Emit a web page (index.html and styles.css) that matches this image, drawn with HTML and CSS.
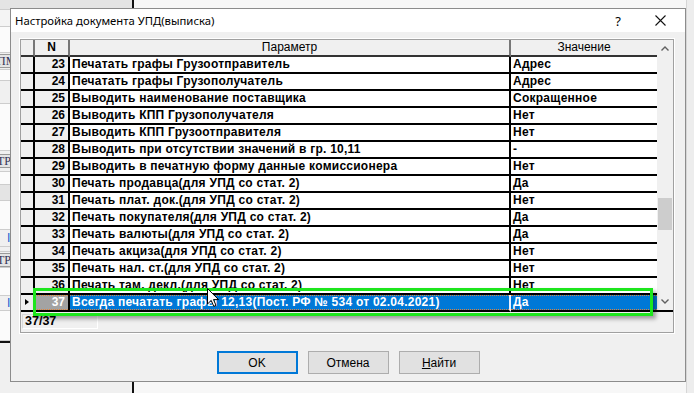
FILE: index.html
```html
<!DOCTYPE html>
<html lang="ru">
<head>
  <meta charset="UTF-8">
  <title>Настройка документа УПД(выписка)</title>
  <link rel="stylesheet" href="styles.css">
</head>
<body>
  <!-- window behind the dialog -->
  <div class="backwin">
    <div class="strip h9 grey"></div>
    <div class="strip h16 soft"></div>
    <div class="strip h25 white"></div>
    <div class="strip h16"><span class="tbtn">ПМ</span></div>
    <div class="strip h10 white"></div>
    <div class="strip h22"></div>
    <div class="strip h46 white"></div>
    <div class="strip h20"><span class="tbtn">ТР</span></div>
    <div class="strip h12 white"></div>
    <div class="strip h15 grey"></div>
    <div class="strip h28 white"></div>
    <div class="strip h16"><span class="blue">I</span></div>
    <div class="strip h4"></div>
    <div class="strip h15"><span class="tbtn">ТР</span></div>
    <div class="strip h27 white"></div>
    <div class="strip h14"><span class="blue">I</span></div>
    <div class="strip h29 white"></div>
    <div class="strip rest"></div>
  </div>
  <div class="backright"></div>

  <div class="dialog">
    <div class="titlebar">
      <span class="title">Настройка документа УПД(выписка)</span>
      <span class="tb-help">?</span>
      <span class="tb-close">
        <svg width="11" height="11" viewBox="0 0 11 11"><path d="M0.5 0.5L10.5 10.5M10.5 0.5L0.5 10.5" stroke="#111" stroke-width="1.1" fill="none"/></svg>
      </span>
    </div>

    <div class="body">
      <div class="gridframe">
        <div class="gridtop">
          <div class="table" id="table">
            <div class="hc ind"></div>
            <div class="hc num">N</div>
            <div class="hc">Параметр</div>
            <div class="hc">Значение</div>
          </div>
          <div class="vscroll">
            <span class="arr up">
              <svg width="8" height="5" viewBox="0 0 8 5"><path d="M0.5 4.5L4 1L7.5 4.5" stroke="#606060" stroke-width="1.4" fill="none"/></svg>
            </span>
            <div class="track"><div class="thumb"></div></div>
            <span class="arr down">
              <svg width="8" height="5" viewBox="0 0 8 5"><path d="M0.5 0.5L4 4L7.5 0.5" stroke="#606060" stroke-width="1.4" fill="none"/></svg>
            </span>
          </div>
        </div>
        <div class="status"><span class="counter">37/37</span></div>
      </div>

      <div class="buttons">
        <button class="btn default">OK</button>
        <button class="btn">Отмена</button>
        <button class="btn"><u>Н</u>айти</button>
      </div>
    </div>
  </div>

  <div class="marker"></div>
  <svg class="cursor" width="13" height="20" viewBox="0 0 13 20">
    <path d="M0.5 0.5L0.5 16L4.2 12.4L6.8 18.4L9 17.4L6.5 11.6L11.5 11.6Z" fill="#fff" stroke="#000" stroke-width="1"/>
  </svg>

<script>
const rows = [
  [23, 'Печатать графы Грузоотправитель', 'Адрес'],
  [24, 'Печатать графы Грузополучатель', 'Адрес'],
  [25, 'Выводить наименование поставщика', 'Сокращенное'],
  [26, 'Выводить КПП Грузополучателя', 'Нет'],
  [27, 'Выводить КПП Грузоотправителя', 'Нет'],
  [28, 'Выводить при отсутствии значений в гр. 10,11', '-'],
  [29, 'Выводить в печатную форму данные комиссионера', 'Нет'],
  [30, 'Печать продавца(для УПД со стат. 2)', 'Да'],
  [31, 'Печать плат. док.(для УПД со стат. 2)', 'Нет'],
  [32, 'Печать покупателя(для УПД со стат. 2)', 'Да'],
  [33, 'Печать валюты(для УПД со стат. 2)', 'Да'],
  [34, 'Печать акциза(для УПД со стат. 2)', 'Нет'],
  [35, 'Печать нал. ст.(для УПД со стат. 2)', 'Нет'],
  [36, 'Печать там. декл.(для УПД со стат. 2)', 'Нет'],
  [37, 'Всегда печатать графы 12,13(Пост. РФ № 534 от 02.04.2021)', 'Да']
];
const table = document.getElementById('table');
rows.forEach(([n, name, val], i) => {
  const sel = i === rows.length - 1 ? ' sel' : '';
  table.insertAdjacentHTML('beforeend',
    `<div class="c ind${sel}">${sel ? '<span class="tri"></span>' : ''}</div>` +
    `<div class="c num${sel}">${n}</div>` +
    `<div class="c txt${sel}">${name}</div>` +
    `<div class="c val${sel}">${val}</div>`);
});
</script>
</body>
</html>
```

FILE: styles.css
```css
*{box-sizing:border-box;}
body{margin:0;width:694px;height:393px;overflow:hidden;position:relative;background:#f7f7f7;font-family:"Liberation Sans",Arial,sans-serif;}

/* background windows */
.backwin{position:absolute;left:0;top:0;width:134px;height:393px;background:#f0f0f0;border-right:2px solid #111;display:flex;flex-direction:column;}
.backright{position:absolute;left:686px;top:0;right:0;height:393px;background:#ededed;border-left:1px solid #d6d6d6;}
.strip{flex:none;border-bottom:1px solid #cdcdcd;display:flex;align-items:center;}
.h4{height:5px;}.h9{height:10px;}.h10{height:11px;}.h12{height:13px;}.h14{height:15px;}
.h15{height:16px;}.h16{height:17px;}.h20{height:21px;}.h22{height:23px;}.h25{height:26px;}
.h27{height:28px;}.h28{height:29px;}.h29{height:30px;}.h46{height:47px;}
.grey{background:#e4e4e4;}
.soft{background:#f4f4f4;}
.white{background:#fbfbfb;}
.rest{flex:1;border-top:2px solid #111;border-bottom:none;}
.tbtn{font-family:"Liberation Serif",serif;font-size:12px;line-height:12px;color:#335;background:#e4e4e4;border:1px solid #9a9a9a;padding:0 1px;margin-left:-5px;}
.blue{color:#1f5fd0;font-size:12px;line-height:12px;margin-left:7px;}

/* dialog */
.dialog{position:absolute;left:10px;top:8px;width:676px;height:374px;border:1px solid #8c8c8c;background:#f0f0f0;display:flex;flex-direction:column;}
.titlebar{height:23px;background:#fff;display:flex;align-items:center;padding-left:4px;font-family:"Noto Sans","Open Sans",sans-serif;font-size:11.3px;color:#000;}
.title{flex:1;}
.tb-help{width:14px;text-align:center;margin-right:30px;font-size:13px;}
.tb-close{width:12px;margin-right:18px;display:flex;}

.body{flex:1;padding:7px 11px 0 9px;display:flex;flex-direction:column;}
.gridframe{height:294px;border:1px solid #a0a0a0;box-shadow:0 0 0 1px #fff;background:#f0f0f0;display:flex;flex-direction:column;}
.gridtop{display:flex;height:272px;}

.table{display:grid;grid-template-columns:14px 35px 441px 146px;grid-auto-rows:17px;width:636px;font-size:12px;}
.hc{background:#f0f0f0;border-right:2px solid #777;border-bottom:2px solid #333;text-align:center;line-height:15px;color:#000;}
.hc.num{font-weight:bold;}
.hc:nth-child(4){border-right:none;}
.c{border-right:2px solid #000;border-bottom:2px solid #000;background:#fff;line-height:15px;font-weight:bold;letter-spacing:0.25px;white-space:nowrap;overflow:hidden;position:relative;color:#000;}
.c.ind{background:#f0f0f0;}
.c.num{background:#f0f0f0;text-align:right;padding-right:3px;letter-spacing:0;}
.c.txt{padding-left:2px;}
.c.val{padding-left:2px;border-right:none;}

.c.num.sel{background:#a3a3a3;color:#fff;}
.c.txt.sel,.c.val.sel{background:#0078d7;color:#fff;}
.c.txt.sel{border-right-color:#e8f0ff;}
.c.num.sel::after,.c.txt.sel::after,.c.val.sel::after{content:"";position:absolute;left:0;right:0;top:0;bottom:0;border-top:1px dotted #e0843a;border-bottom:1px dotted #e0843a;}
.tri{position:absolute;left:4px;top:4px;border-left:4px solid #000;border-top:3.5px solid transparent;border-bottom:3.5px solid transparent;}

.vscroll{width:16px;background:#f0f0f0;display:flex;flex-direction:column;border-bottom:2px solid #000;}
.arr{height:17px;display:flex;align-items:center;justify-content:center;}
.track{flex:1;position:relative;}
.thumb{position:absolute;left:1px;right:1px;top:141px;height:32px;background:#cdcdcd;}

.status{flex:1;padding:2px 0 0 1px;}
.counter{display:block;width:76px;height:15px;border:1px solid;border-color:#dadada #fff #fff #dadada;font-weight:bold;font-size:12.5px;line-height:13px;padding-left:2px;}

.buttons{display:flex;justify-content:center;gap:10px;margin-top:18px;padding-left:2px;}
.btn{width:81px;height:23px;background:#e1e1e1;border:1px solid #adadad;font-family:"Liberation Sans",Arial,sans-serif;font-size:12px;color:#000;padding:0;}
.btn.default{border:2px solid #0078d7;}

/* annotation overlay */
.marker{position:absolute;left:33px;top:288px;width:620px;height:28px;border:3px solid #1de61d;box-shadow:3px 3px 4px rgba(0,0,0,.35);}
.cursor{position:absolute;left:207px;top:288px;}
```
